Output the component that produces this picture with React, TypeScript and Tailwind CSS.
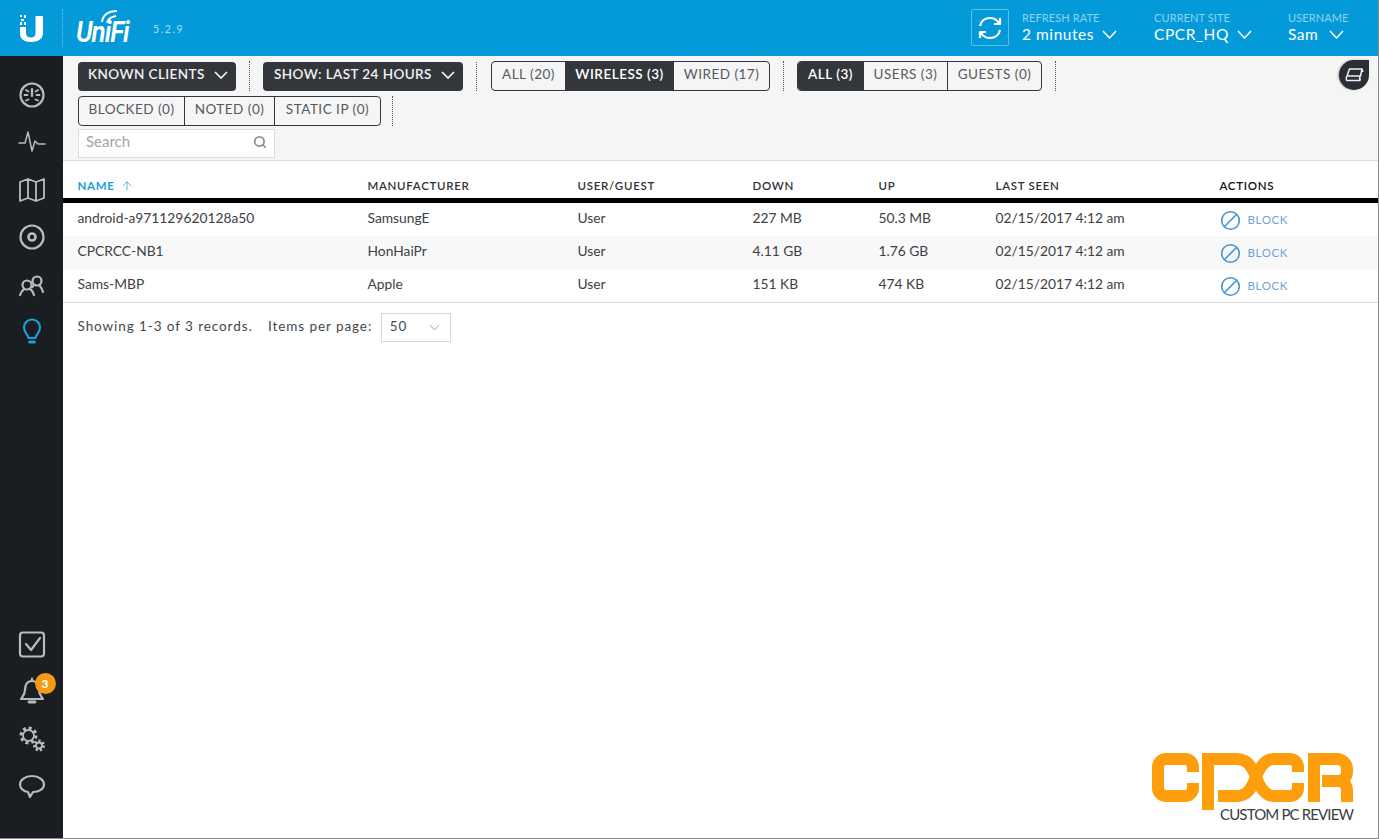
import React from "react";
import { Search, ArrowUp } from "lucide-react";

const Chev = ({ w = 14, h = 8, sw = 1.8, c = "currentColor" }: { w?: number; h?: number; sw?: number; c?: string }) => (
  <svg width={w} height={h} viewBox={`0 0 ${w} ${h}`} fill="none" stroke={c} strokeWidth={sw} className="shrink-0">
    <path d={`M1 1L${w / 2} ${h - 1}L${w - 1} 1`} />
  </svg>
);

const Sep = ({ h = "h-[30px]" }: { h?: string }) => (
  <div className={`${h} w-0 border-l border-dotted border-[#555] mx-[13px]`} />
);

const DarkBtn = ({ label, w, pl }: { label: string; w: string; pl: string }) => (
  <div className={`${w} ${pl} h-[29px] shrink-0 rounded-[4px] bg-[#33373b] text-[#f2f2f2] text-[13.5px] font-semibold tracking-[0.42px] whitespace-nowrap flex items-center pb-[3px] gap-[9px]`}>
    <span>{label}</span>
    <Chev w={14} h={8} sw={1.7} />
  </div>
);

const Group = ({ items }: { items: { t: string; w: string; on?: boolean }[] }) => (
  <div className="flex h-[30px] shrink-0 rounded-[4px] border border-[#33373b] overflow-hidden">
    {items.map((it, i) => (
      <div
        key={it.t}
        className={`${it.w} h-full flex items-center justify-center pb-[3px] text-[13.5px] tracking-[0.5px] whitespace-nowrap ${i > 0 ? "border-l border-[#33373b]" : ""} ${it.on ? "bg-[#33373b] text-white font-semibold" : "text-[#555a5e]"}`}
      >
        {it.t}
      </div>
    ))}
  </div>
);

const Nav = ({ children, active }: { children: React.ReactNode; active?: boolean }) => (
  <div className={`h-[47.5px] flex items-center justify-center ${active ? "text-[#1b9fd8]" : "text-[#b9bcbe]"}`}>
    {children}
  </div>
);

const ic = { width: 28, height: 28, viewBox: "0 0 28 28", fill: "none", stroke: "currentColor", strokeWidth: 1.8, strokeLinecap: "round" as const, strokeLinejoin: "round" as const };

const Header = ({ top, value, w, gap }: { top: string; value: string; w: string; gap: string }) => (
  <div className={`${w} pt-[11px]`}>
    <div className="text-[11px] leading-[13px] text-[#8fd3f2] tracking-[0.1px]">{top}</div>
    <div className={`flex items-center ${gap} text-[15.5px] leading-[21px] text-white tracking-[0.55px]`}>
      <span>{value}</span>
      <Chev w={15} h={9} sw={1.5} />
    </div>
  </div>
);

const cols = ["w-[290px]", "w-[210px]", "w-[175px]", "w-[126px]", "w-[117px]", "w-[224px]", "w-[130px]"];
const heads = ["NAME", "MANUFACTURER", "USER/GUEST", "DOWN", "UP", "LAST SEEN", "ACTIONS"];
const rows = [
  ["android-a971129620128a50", "SamsungE", "User", "227 MB", "50.3 MB", "02/15/2017 4:12 am"],
  ["CPCRCC-NB1", "HonHaiPr", "User", "4.11 GB", "1.76 GB", "02/15/2017 4:12 am"],
  ["Sams-MBP", "Apple", "User", "151 KB", "474 KB", "02/15/2017 4:12 am"],
];

export default function App() {
  return (
    <div className="relative w-[1379px] h-[839px] overflow-hidden bg-white font-['Lato','Open_Sans',sans-serif] flex flex-col border-b border-r border-[#8a8a8a]">
      {/* top bar */}
      <header className="h-[56px] shrink-0 bg-[#049ad9] flex items-stretch text-white">
        <div className="w-[63px] flex items-center justify-center border-r border-dotted border-[#6cc6ec] my-[9px]">
          <svg width="28" height="30" viewBox="0 0 28 30">
            <path d="M3 14h6v6c0 3 2 4.500 5 4.500s4.500-1.500 4.500-4.500V3H26v17c0 6-5 9-12 9S3 26 3 20z" fill="#fff" />
            <g fill="#fff">
              <rect x="3" y="2" width="2" height="2" /><rect x="7" y="2" width="2" height="3" /><rect x="4" y="6" width="3" height="2" /><rect x="3" y="9" width="2" height="3" /><rect x="7" y="9" width="2" height="3" />
            </g>
          </svg>
        </div>
        <div className="relative w-[90px] flex items-center pl-[13px]">
          <span className="text-[26px] italic font-semibold leading-none tracking-[-1px] pt-[7px] font-['Roboto',sans-serif] scale-y-110">UniFi</span>
          <svg className="absolute left-[37px] top-[9px]" width="20" height="14" viewBox="0 0 20 14" fill="none" stroke="#fff" strokeWidth="2">
            <path d="M2 13C3 6 8 2 17 2M7 14c1-4 3-6 9-7" />
          </svg>
        </div>
        <div className="flex items-center text-[10.5px] tracking-[1.6px] text-[#a9def6] pt-[3px]">5.2.9</div>
        <div className="ml-auto flex items-stretch mr-[-1px]">
          <div className="mt-[9px] mr-[13px] w-[38px] h-[37px] border border-[#5cc0ea] rounded-[2px] flex items-center justify-center">
            <svg width="28" height="26" viewBox="0 0 28 26" fill="none" stroke="#fff" strokeWidth="2.200" strokeLinejoin="round">
              <path d="M4 11c1-5 5-8 10-8 4 0 7 2 9 5" />
              <path d="M24 3v6h-6" />
              <path d="M24 15c-1 5-5 8-10 8-4 0-7-2-9-5" />
              <path d="M4 23v-6h6" />
            </svg>
          </div>
          <Header top="REFRESH RATE" value="2 minutes" w="w-[132px]" gap="gap-[8px]" />
          <Header top="CURRENT SITE" value="CPCR_HQ" w="w-[134px]" gap="gap-[8px]" />
          <Header top="USERNAME" value="Sam" w="w-[91px]" gap="gap-[11px]" />
        </div>
      </header>

      <div className="flex flex-1 min-h-0">
        {/* sidebar */}
        <nav className="w-[63px] shrink-0 bg-[#1a1d22] flex flex-col pt-[15px] pb-[28px]">
          <Nav>
            <svg {...ic}>
              <circle cx="14" cy="14" r="11.500" strokeWidth="2.200" />
              <path d="M14 8v7" strokeWidth="2.200" />
              <path d="M6.500 14h3M18.500 14h3M8 9l2.500 1.500M20 9l-2.500 1.500M8 19.500l2.500-1M20 19.500l-2.500-1" />
            </svg>
          </Nav>
          <Nav>
            <svg {...ic} strokeWidth="1.500"><path d="M1 15h6l3-11 4 19 3-10 3 3h7" /></svg>
          </Nav>
          <Nav>
            <svg {...ic}>
              <path d="M2 6l8-3 8 3 8-3v19l-8 3-8-3-8 3zM10 3v19M18 6v19" />
            </svg>
          </Nav>
          <Nav>
            <svg {...ic}><circle cx="14" cy="14" r="11.500" strokeWidth="2.200" /><circle cx="14" cy="14" r="3.500" strokeWidth="2.600" /></svg>
          </Nav>
          <Nav>
            <svg {...ic} strokeWidth="2.200">
              <circle cx="9" cy="14" r="4.500" /><path d="M2 24c1-3 3-5 4-6M16 24c-1-3-2-5-4-6" />
              <circle cx="19" cy="10" r="4.500" /><path d="M14.500 16l1-1.500M25 21c-1-3-2-5-3.500-6.500" />
            </svg>
          </Nav>
          <Nav active>
            <svg {...ic} strokeWidth="2.200">
              <path d="M10.500 20c0-3-4.500-5-4.500-10.500a8 8 0 0116 0C22 15 17.500 17 17.500 20z" />
              <path d="M11.500 24h5" strokeWidth="2.800" />
            </svg>
          </Nav>
          <div className="flex-1" />
          <Nav>
            <svg {...ic} strokeWidth="2.200">
              <rect x="2" y="2.500" width="24" height="24" rx="3" />
              <path d="M8 14l5 6 9-12" />
            </svg>
          </Nav>
          <Nav>
            <div className="relative">
              <svg {...ic} strokeWidth="2.200" className="block">
                <path d="M14 4c-5 0-7 4-7 9 0 4-2 6-4 9h22c-2-3-4-5-4-9 0-5-2-9-7-9zM14 1.500V4" />
                <path d="M11 25h6" strokeWidth="2.800" />
              </svg>
              <span className="absolute -top-[4px] left-[17px] w-[21px] h-[21px] rounded-full bg-[#f49a17] text-white text-[12px] font-bold flex items-center justify-center">3</span>
            </div>
          </Nav>
          <Nav>
            <svg {...ic} strokeLinecap="butt">
              <circle cx="10.500" cy="10.500" r="5.500" strokeWidth="1.800" />
              <circle cx="10.500" cy="10.500" r="7.500" strokeWidth="3" strokeDasharray="3 2.890" />
              <circle cx="21" cy="20.500" r="3" strokeWidth="1.800" />
              <circle cx="21" cy="20.500" r="4.700" strokeWidth="2.600" strokeDasharray="2.200 2" />
            </svg>
          </Nav>
          <Nav>
            <svg {...ic} strokeWidth="2.200">
              <path d="M14 4C7 4 2 8 2 12.500c0 4 4 7 8 7.500l2 5 3-5c6 0 11-3 11-7.500C26 8 21 4 14 4z" />
            </svg>
          </Nav>
        </nav>

        {/* main */}
        <main className="flex-1 min-w-0 flex flex-col">
          <div className="relative h-[105px] shrink-0 bg-[#f5f5f5] border-b border-[#dedede] pl-[15px] pt-[5px]">
            <div className="flex items-center h-[30px]">
              <DarkBtn label="KNOWN CLIENTS" w="w-[158px]" pl="pl-[10px]" />
              <Sep />
              <DarkBtn label="SHOW: LAST 24 HOURS" w="w-[200px]" pl="pl-[11px]" />
              <Sep h="h-[29px]" />
              <div className="w-[1px]" />
              <Group items={[{ t: "ALL (20)", w: "w-[73px]" }, { t: "WIRELESS (3)", w: "w-[108px]", on: true }, { t: "WIRED (17)", w: "w-[96px]" }]} />
              <Sep />
              <Group items={[{ t: "ALL (3)", w: "w-[65px]", on: true }, { t: "USERS (3)", w: "w-[84px]" }, { t: "GUESTS (0)", w: "w-[94px]" }]} />
              <Sep />
            </div>
            <div className="flex items-center h-[30px] mt-[5px]">
              <Group items={[{ t: "BLOCKED (0)", w: "w-[105px]" }, { t: "NOTED (0)", w: "w-[90px]" }, { t: "STATIC IP (0)", w: "w-[106px]" }]} />
              <div className="w-0 h-[30px] border-l border-dotted border-[#555] ml-[11px]" />
            </div>
            <div className="mt-[3px] w-[197px] h-[29px] bg-white border border-[#dcdcdc] flex items-center justify-between pl-[7px] pr-[7px] pb-[4px] text-[15px] text-[#a3a5a7]">
              <span>Search</span>
              <Search size={14} strokeWidth={3} className="text-[#8d9093]" />
            </div>
            <div className="absolute top-[4px] right-[9px] w-[30px] h-[30px] rounded-full rounded-tr-[3px] bg-[#2a2e35] shadow-[-1px_0_2px_rgba(0,0,0,0.3)] flex items-center justify-center">
              <svg width="19" height="16" viewBox="0 0 19 16" fill="none" stroke="#f0f0f0" strokeWidth="1.500" strokeLinejoin="round">
                <path d="M4.500 2H17l-1.500 7H2zM2 9c-1 1-1 4 0 4.500h13.500M15.500 9c-1 1-1 3 0 4.500M17 2l1 3" />
              </svg>
            </div>
          </div>

          {/* table */}
          <div className="flex h-[42px] shrink-0 items-end pl-[14.5px] border-b-[5px] border-black pb-[5px] text-[11.500px] leading-[14px] font-semibold tracking-[0.7px] text-[#2e3236]">
            {heads.map((h, i) => (
              <div key={h} className={`${cols[i]} flex items-center gap-[5px] ${i === 0 ? "text-[#1b9fd8] font-bold" : ""} ${i === 6 ? "text-[#111]" : ""}`}>
                {h}
                {i === 0 && <ArrowUp size={14} strokeWidth={1.200} />}
              </div>
            ))}
          </div>
          {rows.map((r, ri) => (
            <div key={r[0]} className={`flex h-[33px] shrink-0 items-center pl-[14.5px] pb-[2px] text-[13.800px] text-[#3d4145] ${ri === 1 ? "bg-[#f8f8f8]" : ""}`}>
              {r.map((c, i) => (
                <div key={i} className={`${cols[i]} whitespace-nowrap`}>{c}</div>
              ))}
              <div className="w-[130px] flex items-center gap-[7px] pt-[3px] text-[11.500px] tracking-[0.6px] text-[#6ea3d4]">
                <svg width="21" height="21" viewBox="0 0 21 21" fill="none" stroke="#3f97cc" strokeWidth="1.600">
                  <circle cx="10.500" cy="10.500" r="8.800" />
                  <path d="M4.500 16.500L16.500 4.500" />
                </svg>
                BLOCK
              </div>
            </div>
          ))}
          <div className="border-t border-[#dadada] h-[1px] shrink-0" />
          <div className="flex items-center pl-[14.5px] mt-[10px] text-[13.500px] text-[#43474b] tracking-[0.92px]">
            <span className="pb-[2px]">Showing 1-3 of 3 records.</span>
            <span className="ml-[15.5px] pb-[2px]">Items per page:</span>
            <div className="ml-[8.5px] w-[70px] h-[29px] border border-[#d8d8d8] flex items-center justify-between pl-[8px] pr-[10px]">
              <span className="pb-[2px]">50</span>
              <Chev w={11} h={7} sw={0.900} c="#9a9a9a" />
            </div>
          </div>
        </main>
      </div>

      {/* watermark */}
      <div className="absolute left-[1152px] top-[752px] w-[205px] h-[72px]">
        <svg className="absolute left-0 top-0" width="202" height="60" viewBox="0 0 202 60" fill="none" stroke="#ff9e0c" strokeWidth="12">
          <path d="M41 20v-5a8 8 0 00-8-8H14a8 8 0 00-8 8v21a8 8 0 008 8h19a8 8 0 008-8v-5" />
          <path d="M56 58V7h29c10 0 15 7 19 18 4 11 9 19 18 19h16a8 8 0 008-8v-5" />
          <path d="M66 44h19c10 0 15-8 19-19 4-11 9-18 18-18h16a8 8 0 018 8v5" />
          <path d="M162 50V7h23a10 10 0 0110 10v3a9 9 0 01-9 9h-16M186 29a9 9 0 019 9v12" />
        </svg>
        <div className="absolute left-[68px] top-[53px] text-[15px] leading-[18px] tracking-[-0.85px] font-normal text-[#3c3c3e] whitespace-nowrap">CUSTOM PC REVIEW</div>
      </div>
    </div>
  );
}
